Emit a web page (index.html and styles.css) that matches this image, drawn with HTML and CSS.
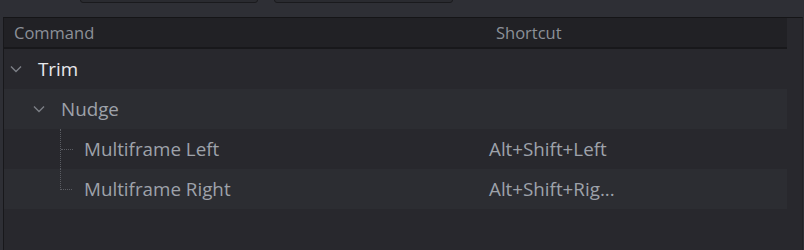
FILE: index.html
```html
<!DOCTYPE html>
<html>
<head>
<meta charset="utf-8">
<link rel="stylesheet" href="styles.css">
</head>
<body>
<div class="toolbar">
  <div class="tbtn tbtn-a"></div>
  <div class="tbtn tbtn-b"></div>
</div>
<div class="panel">
  <div class="table">
    <div class="head">
      <div class="col-cmd">Command</div>
      <div class="col-key">Shortcut</div>
    </div>
    <div class="row row-a">
      <div class="col-cmd lvl0">
        <svg class="chev" width="12" height="8" viewBox="0 0 12 8"><path d="M1 1.5 L6 6.5 L11 1.5" fill="none" stroke="#7c7f86" stroke-width="1.4"/></svg>
        <span class="t-main">Trim</span>
      </div>
      <div class="col-key"></div>
    </div>
    <div class="row row-b">
      <div class="col-cmd lvl1">
        <svg class="chev" width="12" height="8" viewBox="0 0 12 8"><path d="M1 1.5 L6 6.5 L11 1.5" fill="none" stroke="#7c7f86" stroke-width="1.4"/></svg>
        <span class="t-sub">Nudge</span>
      </div>
      <div class="col-key"></div>
    </div>
    <div class="row row-a">
      <div class="col-cmd lvl2">
        <span class="branch branch-mid"></span>
        <span class="t-sub">Multiframe Left</span>
      </div>
      <div class="col-key t-sub">Alt+Shift+Left</div>
    </div>
    <div class="row row-b">
      <div class="col-cmd lvl2">
        <span class="branch branch-end"></span>
        <span class="t-sub">Multiframe Right</span>
      </div>
      <div class="col-key t-sub">Alt+Shift+Rig...</div>
    </div>
  </div>
  <div class="scroll"></div>
</div>
</body>
</html>
```
FILE: styles.css
```css
html, body {
  margin: 0;
  padding: 0;
  background: #2e2f35;
  width: 804px;
  height: 250px;
  overflow: hidden;
  font-family: "Open Sans", "Noto Sans", sans-serif;
}
.toolbar {
  height: 17px;
  position: relative;
}
.tbtn {
  position: absolute;
  top: -20px;
  height: 21px;
  border: 1px solid #1a1a1d;
  border-radius: 3px;
  background: #2a2b30;
}
.tbtn-a { left: 80px; width: 176px; }
.tbtn-b { left: 274px; width: 177px; }
.panel {
  margin-left: 3px;
  margin-right: 1px;
  height: 233px;
  border-top: 1px solid #151517;
  border-left: 1px solid #18181b;
  border-right: 1px solid #222226;
  background: #28282d;
  display: flex;
}
.table {
  width: 783px;
  display: flex;
  flex-direction: column;
}
.scroll {
  flex: 1;
  background: #28282d;
}
.head {
  height: 29px;
  background: #212125;
  border-bottom: 2px solid #18181b;
  display: flex;
  align-items: center;
  font-size: 16.5px;
  color: #8c9098;
}
.col-cmd {
  box-sizing: border-box;
  width: 485px;
  display: flex;
  align-items: center;
  height: 100%;
  flex: none;
}
.head .col-cmd { padding-left: 10px; width: 492px; }
.row {
  height: 40px;
  display: flex;
  align-items: center;
  font-size: 18.8px;
}
.row-a { background: #28282d; }
.row-b { background: #2c2d32; }
.lvl0 { padding-left: 6px; }
.lvl1 { padding-left: 29px; }
.lvl2 { padding-left: 56px; }
.chev { margin-right: 16px; flex: none; }
.t-main { color: #e8e9ec; }
.t-sub { color: #9ea2aa; }
.branch {
  flex: none;
  width: 12px;
  height: 100%;
  margin-right: 12px;
  position: relative;
  box-sizing: border-box;
}
.branch-mid { border-left: 1px dotted #5a5c62; }
.branch-mid::after, .branch-end::after {
  content: "";
  position: absolute;
  left: 0;
  top: 20px;
  width: 12px;
  border-top: 1px dotted #5a5c62;
}
.branch-end::before {
  content: "";
  position: absolute;
  left: 0;
  top: 0;
  height: 21px;
  border-left: 1px dotted #5a5c62;
}
```
